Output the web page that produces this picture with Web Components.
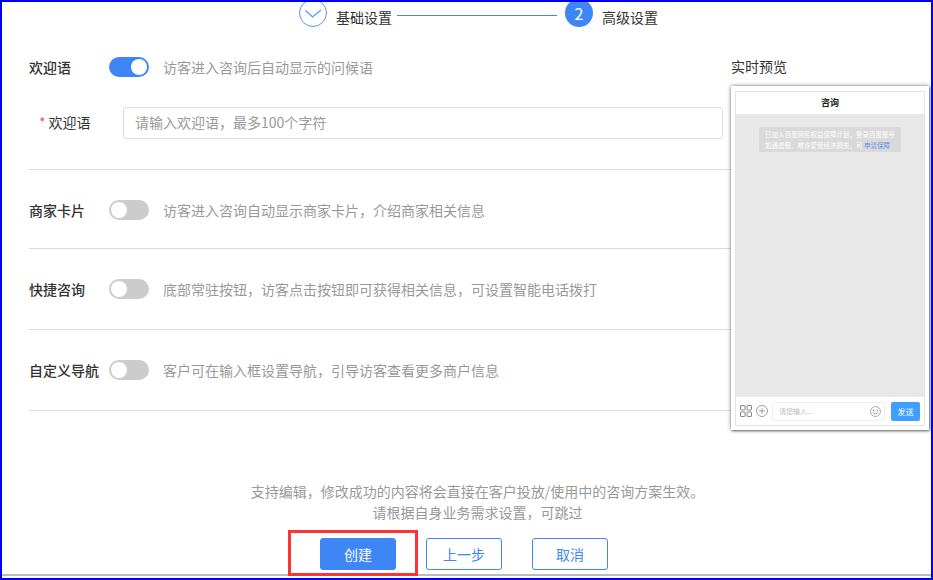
<!DOCTYPE html>
<html lang="zh">
<head>
<meta charset="utf-8">
<title>高级设置</title>
<style>
    html, body { margin: 0; padding: 0; background: #fff; }
    body { font-family: "Noto Sans CJK SC", "Liberation Sans", sans-serif; font-size: 14px; color: #333; }
</style>
</head>
<body>
<app-frame>
    <step-bar></step-bar>
    <div slot="left">
        <setting-row label="欢迎语" desc="访客进入咨询后自动显示的问候语" on first>
            <text-field label="欢迎语" placeholder="请输入欢迎语，最多100个字符"></text-field>
        </setting-row>
        <setting-row label="商家卡片" desc="访客进入咨询自动显示商家卡片，介绍商家相关信息" short></setting-row>
        <setting-row label="快捷咨询" desc="底部常驻按钮，访客点击按钮即可获得相关信息，可设置智能电话拨打"></setting-row>
        <setting-row label="自定义导航" desc="客户可在输入框设置导航，引导访客查看更多商户信息"></setting-row>
    </div>
    <chat-preview slot="right"></chat-preview>
    <action-bar slot="footer"></action-bar>
</app-frame>

<script>
class AppFrame extends HTMLElement {
    constructor() {
        super();
        this.attachShadow({ mode: "open" });
        this.shadowRoot.innerHTML = `
            <style>
                :host {
                    display: block;
                    box-sizing: border-box;
                    width: 933px;
                    height: 580px;
                    border: 2px solid #0000f5;
                    overflow: hidden;
                    background: #fff;
                }
                .columns {
                    display: grid;
                    grid-template-columns: 702px 198px;
                    margin-top: 2px;
                    padding-left: 27px;
                }
            </style>
            <slot></slot>
            <div class="columns">
                <slot name="left"></slot>
                <slot name="right"></slot>
            </div>
            <slot name="footer"></slot>
        `;
    }
}

class StepBar extends HTMLElement {
    constructor() {
        super();
        this.attachShadow({ mode: "open" });
        this.shadowRoot.innerHTML = `
            <style>
                :host {
                    display: flex;
                    align-items: center;
                    height: 28px;
                    margin-top: -3px;
                    padding-left: 297px;
                    color: #333;
                }
                svg { display: block; flex: none; }
                .label { margin-left: 9px; line-height: 20px; margin-top: 8px; }
                .line { width: 160px; height: 1px; margin: 4px 8px 0 5px; background: #3e86f5; }
                .num {
                    width: 28px;
                    height: 28px;
                    border-radius: 50%;
                    background: #3e86f5;
                    color: #fff;
                    font-size: 16px;
                    line-height: 28px;
                    text-align: center;
                    flex: none;
                }
            </style>
            <svg width="28" height="28" viewBox="0 0 28 28" fill="none" stroke="#5b96f6">
                <circle cx="14" cy="14" r="13.5"></circle>
                <path d="M6.5 11.5 L13.5 18 L22 11" stroke-width="1.2"></path>
            </svg>
            <span class="label">基础设置</span>
            <span class="line"></span>
            <span class="num">2</span>
            <span class="label">高级设置</span>
        `;
    }
}

class ToggleSwitch extends HTMLElement {
    constructor() {
        super();
        this.attachShadow({ mode: "open" });
        this.shadowRoot.innerHTML = `
            <style>
                :host {
                    display: flex;
                    box-sizing: border-box;
                    width: 40px;
                    height: 20px;
                    flex: none;
                    padding: 2px;
                    border-radius: 10px;
                    background: #ccc;
                }
                :host([on]) { background: #3e86f5; justify-content: flex-end; }
                .knob { width: 16px; height: 16px; border-radius: 50%; background: #fff; }
            </style>
            <span class="knob"></span>
        `;
    }
}

class SettingRow extends HTMLElement {
    constructor() {
        super();
        this.attachShadow({ mode: "open" });
        this.shadowRoot.innerHTML = `
            <style>
                :host {
                    display: block;
                    padding: 30px 0;
                    border-bottom: 1px solid #ddd;
                }
                :host([first]) { padding-top: 28px; }
                :host([short]) { padding-bottom: 28px; }
                .head { display: flex; align-items: center; height: 20px; }
                .label { width: 80px; flex: none; font-weight: 500; color: #333; white-space: nowrap; }
                .desc { color: #999; white-space: nowrap; }
                toggle-switch { margin-right: 14px; }
            </style>
            <div class="head">
                <span class="label"></span>
                <toggle-switch></toggle-switch>
                <span class="desc"></span>
            </div>
            <slot></slot>
        `;
    }

    connectedCallback() {
        this.shadowRoot.querySelector(".label").textContent = this.getAttribute("label");
        this.shadowRoot.querySelector(".desc").textContent = this.getAttribute("desc");
        if (this.hasAttribute("on")) {
            this.shadowRoot.querySelector("toggle-switch").setAttribute("on", "");
        }
    }
}

class TextField extends HTMLElement {
    constructor() {
        super();
        this.attachShadow({ mode: "open" });
        this.shadowRoot.innerHTML = `
            <style>
                :host {
                    display: flex;
                    align-items: center;
                    margin-top: 30px;
                    padding-left: 10px;
                }
                .label { width: 84px; flex: none; margin-bottom: 2px; white-space: nowrap; color: #333; }
                .star { color: #f0506e; margin-right: 3px; }
                .input {
                    box-sizing: border-box;
                    width: 600px;
                    height: 32px;
                    padding: 0 11px;
                    line-height: 28px;
                    border: 1px solid #ddd;
                    border-radius: 3px;
                    color: #999;
                }
            </style>
            <span class="label"><span class="star">*</span><span class="text"></span></span>
            <div class="input"></div>
        `;
    }

    connectedCallback() {
        this.shadowRoot.querySelector(".text").textContent = this.getAttribute("label");
        this.shadowRoot.querySelector(".input").textContent = this.getAttribute("placeholder");
    }
}

class ChatPreview extends HTMLElement {
    constructor() {
        super();
        this.attachShadow({ mode: "open" });
        this.shadowRoot.innerHTML = `
            <style>
                :host { display: block; padding-top: 28px; }
                .title { line-height: 18px; color: #333; margin-bottom: 11px; }
                .card {
                    box-sizing: border-box;
                    height: 344px;
                    padding: 5px 4px 4px;
                    background: #fff;
                    box-shadow: 0 0 4px rgba(0, 0, 0, 0.55), 1px 1px 2px rgba(0, 0, 0, 0.4);
                    display: flex;
                }
                .phone {
                    flex: 1;
                    display: flex;
                    flex-direction: column;
                    border: 1px solid #e4e4e4;
                }
                .head {
                    height: 22px;
                    line-height: 22px;
                    text-align: center;
                    font-size: 9px;
                    font-weight: 700;
                    color: #222;
                }
                .body { flex: 1; padding-top: 13px; background: #e8e8e8; }
                .notice {
                    box-sizing: border-box;
                    width: 142px;
                    height: 25px;
                    margin: 0 0 0 23px;
                    padding: 2px 6px;
                    border-radius: 2px;
                    background: #d9d9d9;
                    color: #fff;
                    font-size: 6.5px;
                    line-height: 10.5px;
                    white-space: nowrap;
                }
                .notice a { color: #5b8cf5; }
                .foot {
                    height: 28px;
                    display: flex;
                    align-items: center;
                    padding: 0 4px;
                    gap: 4px;
                }
                .foot svg { display: block; flex: none; }
                .box {
                    box-sizing: border-box;
                    width: 113px;
                    height: 19px;
                    padding: 0 3px 0 6px;
                    display: flex;
                    align-items: center;
                    justify-content: space-between;
                    border: 1px solid #eee;
                    border-radius: 2px;
                    font-size: 7px;
                    color: #bbb;
                }
                .send {
                    width: 29px;
                    height: 19px;
                    margin-left: 2px;
                    border-radius: 2px;
                    background: #409eff;
                    color: #fff;
                    font-size: 8px;
                    line-height: 19px;
                    text-align: center;
                }
            </style>
            <div class="title">实时预览</div>
            <div class="card">
                <div class="phone">
                    <div class="head">咨询</div>
                    <div class="body">
                        <div class="notice">已加入百度网民权益保障计划，登录百度账号<br>如遇虚假、欺诈蒙受经济损失，可 <a>申请保障</a></div>
                    </div>
                    <div class="foot">
                        <svg width="12" height="12" viewBox="0 0 12 12" fill="none" stroke="#888" stroke-width="1">
                            <rect x="0.5" y="0.5" width="4.5" height="4.5" rx="0.5"></rect>
                            <rect x="7" y="0.5" width="4.5" height="4.5" rx="0.5"></rect>
                            <rect x="0.5" y="7" width="4.5" height="4.5" rx="0.5"></rect>
                            <rect x="7" y="7" width="4.5" height="4.5" rx="0.5"></rect>
                        </svg>
                        <svg width="12" height="12" viewBox="0 0 12 12" fill="none" stroke="#888" stroke-width="0.8">
                            <circle cx="6" cy="6" r="5.5"></circle>
                            <path d="M3 6 H9 M6 3 V9"></path>
                        </svg>
                        <div class="box">
                            <span>请您输入...</span>
                            <svg width="11" height="11" viewBox="0 0 12 12" fill="none" stroke="#888" stroke-width="0.8">
                                <circle cx="6" cy="6" r="5.4"></circle>
                                <circle cx="4" cy="4.8" r="0.5" fill="#888"></circle>
                                <circle cx="8" cy="4.8" r="0.5" fill="#888"></circle>
                                <path d="M3.2 7.2 Q6 10 8.8 7.2"></path>
                            </svg>
                        </div>
                        <div class="send">发送</div>
                    </div>
                </div>
            </div>
        `;
    }
}

class ActionBar extends HTMLElement {
    constructor() {
        super();
        this.attachShadow({ mode: "open" });
        this.shadowRoot.innerHTML = `
            <style>
                :host {
                    display: block;
                    position: relative;
                    margin-top: 51px;
                }
                .note {
                    padding-left: 22px;
                    text-align: center;
                    line-height: 21px;
                    color: #999;
                }
                .btns {
                    display: flex;
                    gap: 30px;
                    margin-top: 15px;
                    padding-left: 318px;
                }
                .btn {
                    box-sizing: border-box;
                    width: 76px;
                    height: 32px;
                    line-height: 30px;
                    text-align: center;
                    border: 1px solid #3e86f5;
                    border-radius: 3px;
                    color: #3e86f5;
                    background: #fff;
                }
                .btn.primary { background: #3e86f5; color: #fff; }
                .rule { height: 2px; margin-top: 4px; background: #bbb; }
                .mark {
                    position: absolute;
                    left: 286px;
                    bottom: 0;
                    box-sizing: border-box;
                    width: 130px;
                    height: 46px;
                    border: 3px solid #f33;
                }
            </style>
            <div class="note">支持编辑，修改成功的内容将会直接在客户投放/使用中的咨询方案生效。<br>请根据自身业务需求设置，可跳过</div>
            <div class="btns">
                <div class="btn primary">创建</div>
                <div class="btn">上一步</div>
                <div class="btn">取消</div>
            </div>
            <div class="rule"></div>
            <div class="mark"></div>
        `;
    }
}

customElements.define("app-frame", AppFrame);
customElements.define("step-bar", StepBar);
customElements.define("toggle-switch", ToggleSwitch);
customElements.define("setting-row", SettingRow);
customElements.define("text-field", TextField);
customElements.define("chat-preview", ChatPreview);
customElements.define("action-bar", ActionBar);
</script>
</body>
</html>
